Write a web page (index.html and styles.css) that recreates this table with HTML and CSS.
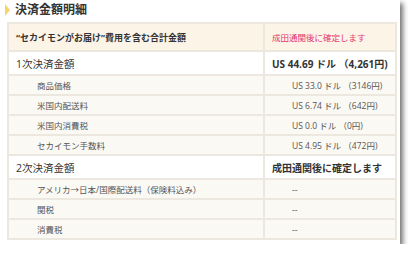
FILE: index.html
```html
<!DOCTYPE html>
<html>
<head>
  <title>決済金額明細</title>
  <meta charset="utf-8">
  <link rel="stylesheet" href="styles.css">
</head>
<body>
  <div class="panel">
    <h2 class="heading">決済金額明細</h2>
    <table class="detail">
      <colgroup>
        <col class="col-name">
        <col class="col-val">
      </colgroup>
      <tr class="head">
        <td class="name">“セカイモンがお届け”費用を含む合計金額</td>
        <td class="note">成田通関後に確定します</td>
      </tr>
      <tr class="total">
        <td class="name">1次決済金額</td>
        <td class="val">US 44.69 ドル （4,261円)</td>
      </tr>
      <tr class="sub"><td class="name">商品価格</td><td class="val">US 33.0 ドル （3146円)</td></tr>
      <tr class="sub"><td class="name">米国内配送料</td><td class="val">US 6.74 ドル （642円)</td></tr>
      <tr class="sub"><td class="name">米国内消費税</td><td class="val">US 0.0 ドル （0円)</td></tr>
      <tr class="sub"><td class="name">セカイモン手数料</td><td class="val">US 4.95 ドル （472円)</td></tr>
      <tr class="total">
        <td class="name">2次決済金額</td>
        <td class="val">成田通関後に確定します</td>
      </tr>
      <tr class="sub"><td class="name">アメリカ→日本/国際配送料（保険料込み）</td><td class="val">--</td></tr>
      <tr class="sub"><td class="name">関税</td><td class="val">--</td></tr>
      <tr class="sub"><td class="name">消費税</td><td class="val">--</td></tr>
    </table>
  </div>
</body>
</html>
```

FILE: styles.css
```css
body {
  margin: 0;
  background: #fff;
  font-family: "Open Sans", "Noto Sans CJK JP", sans-serif;
  color: #333;
}

.panel {
  width: 400px;
  height: 244px;
  background: #fff;
  box-shadow: 3px 3px 5px rgba(0,0,0,0.55);
  overflow: hidden;
}

.heading {
  margin: 0;
  padding: 2px 0 0 15px;
  height: 20px;
  font-size: 12px;
  line-height: 16px;
  font-weight: bold;
  color: #333;
  position: relative;
}
/* yellow marker before the heading */
.heading:before {
  content: "";
  position: absolute;
  left: 5px;
  top: 4px;
  border-left: 5px solid #f6d36b;
  border-top: 6px solid transparent;
  border-bottom: 6px solid transparent;
}

.detail {
  margin-left: 7px;
  width: 390px;
  table-layout: fixed;
  border-collapse: collapse;
  border: 2px solid #e8e4db;
}
.col-name {
  width: 256px;
}
.detail td {
  border: 2px solid #ece8df;
  padding: 0;
  vertical-align: middle;
  white-space: nowrap;
  overflow: hidden;
}
.detail .name {
  padding-left: 7px;
}
.detail .val,
.detail .note {
  padding-left: 7px;
}

.head td {
  height: 26px;
  background: #fdf4e8;
  font-size: 9px;
  font-weight: bold;
}
.head .note {
  color: #e2386e;
  font-size: 8.5px;
  font-weight: normal;
}

.total td {
  height: 22px;
  background: #fff;
  font-size: 10px;
  font-weight: bold;
}
.total .name {
  font-weight: normal;
  font-size: 10.5px;
}

.sub td {
  height: 18px;
  background: #fbf9f4;
  font-size: 8.5px;
  color: #555;
}
.sub .name {
  padding-left: 28px;
}
.sub .val {
  padding-left: 27px;
}
```
